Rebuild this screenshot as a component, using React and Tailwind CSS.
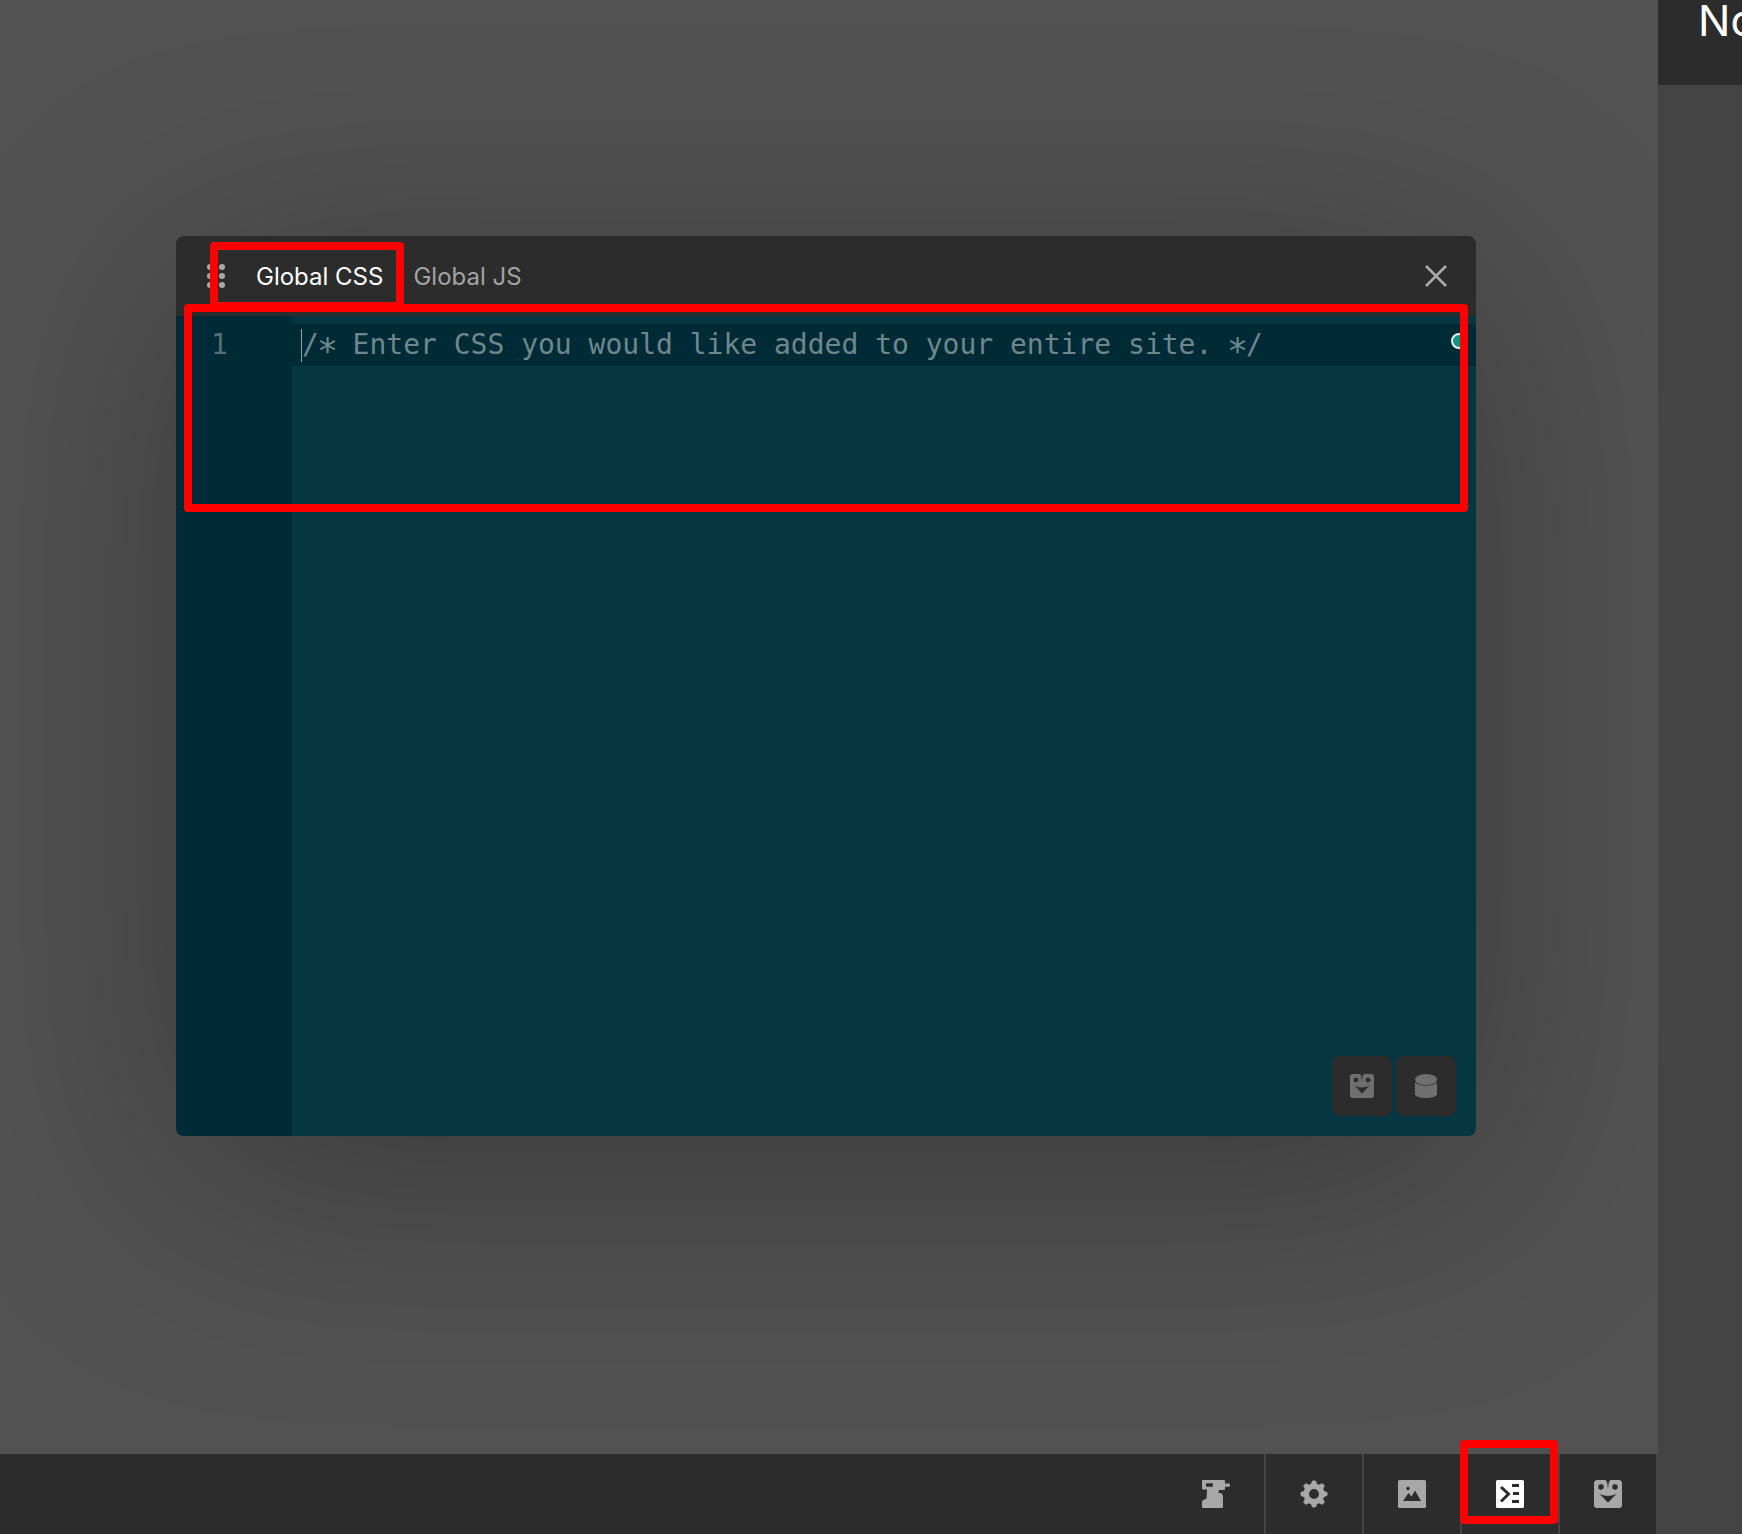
// App.jsx
const PenguinIcon = ({ className, cut }) => (
  <svg viewBox="0 0 24 24" className={className}>
    <path
      fill="currentColor"
      d="M3 0h6c2 0 2.500 2 3 8 .5-6 1-8 3-8h6a3 3 0 0 1 3 3v18.500a2.500 2.500 0 0 1-2.500 2.500h-19A2.500 2.500 0 0 1 0 21.500V3a3 3 0 0 1 3-3z"
    />
    <rect x="3.700" y="3.700" width="4.600" height="4.600" rx="1.800" fill={cut} />
    <rect x="15.700" y="3.700" width="4.600" height="4.600" rx="1.800" fill={cut} />
    <path fill={cut} d="M4.500 11.500c2.200 1.300 4.800 2 7.500 2s5.300-.7 7.500-2L12 19.500z" />
  </svg>
);

const DatabaseIcon = ({ className }) => (
  <svg viewBox="0 0 24 24" className={className}>
    <ellipse cx="12" cy="5.500" rx="11" ry="5.500" fill="currentColor" />
    <path
      fill="currentColor"
      d="M1 8c2 2.500 6 3.800 11 3.800S21 10.500 23 8v12c0 2.500-5 4-11 4S1 22.500 1 20z"
    />
  </svg>
);

const DrillIcon = () => (
  <svg viewBox="0 0 28 28" className="w-7 h-7 text-[#a8a8a8]">
    <path
      fill="currentColor"
      d="M1 0h21a1 1 0 0 1 1 1v2.500h4a1 1 0 0 1 1 1v1.300a1 1 0 0 1-1 1h-4V9a1 1 0 0 1-1 1h-5l-.6 3H18c1.500 0 3 1.500 3 4v10a1 1 0 0 1-1 1H1a1 1 0 0 1-1-1v-5c0-1 .6-1.500 1.500-2l3-1.500.6-9H1a1 1 0 0 1-1-1V1a1 1 0 0 1 1-1z"
    />
    <rect x="4" y="3.300" width="7" height="3.400" rx="1" fill="#2c2c2c" />
  </svg>
);

const GearIcon = () => (
  <svg viewBox="0 0 28 28" className="w-7 h-7 text-[#a8a8a8]">
    {[0, 45, 90, 135, 180, 225, 270, 315].map((a) => (
      <path
        key={a}
        d="M12.500 1h3l2 6h-7z"
        fill="currentColor"
        stroke="currentColor"
        strokeWidth="1"
        strokeLinejoin="round"
        transform={`rotate(${a} 14 14)`}
      />
    ))}
    <circle cx="14" cy="14" r="7.750" fill="none" stroke="currentColor" strokeWidth="5.500" />
  </svg>
);

const ImageIcon = () => (
  <svg viewBox="0 0 28 28" className="w-7 h-7 text-[#a8a8a8]">
    <rect width="28" height="28" rx="1.500" fill="currentColor" />
    <circle cx="10" cy="8.500" r="1.700" fill="#2c2c2c" />
    <path fill="#2c2c2c" d="M5 21l5.500-8 3 3.500 3.500-6 6 10.500z" />
  </svg>
);

const CodeIcon = () => (
  <svg viewBox="0 0 28 28" className="w-7 h-7">
    <rect width="28" height="28" rx="1.500" fill="#fff" />
    <path d="M5 7l7.500 7L5 21.500" fill="none" stroke="#2c2c2c" strokeWidth="3" />
    <path d="M16 5.500h7M17 13.500h6M16 21.500h7" fill="none" stroke="#2c2c2c" strokeWidth="3" />
  </svg>
);

const tools = [
  { key: "drill", icon: <DrillIcon /> },
  { key: "gear", icon: <GearIcon /> },
  { key: "image", icon: <ImageIcon /> },
  { key: "code", icon: <CodeIcon /> },
  { key: "penguin", icon: <PenguinIcon className="w-7 h-7 text-[#a8a8a8]" cut="#2c2c2c" /> },
];

// Menlo's asterisk sits lower and is bigger than the DejaVu one
const Star = () => <span className="inline-block translate-y-[7px] scale-125">*</span>;

function EditorModal() {
  return (
    <div className="w-[1300px] h-[900px] flex flex-col rounded-[8px] overflow-hidden shadow-[0_40px_240px_rgba(0,0,0,0.3)]">
      {/* Header with tabs */}
      <div className="h-[80px] shrink-0 bg-[#2c2c2c] flex items-center">
        <div className="ml-[31px] grid grid-cols-2 gap-x-[6px] gap-y-[3px]">
          {[0, 1, 2, 3, 4, 5].map((i) => (
            <span key={i} className="w-[6px] h-[6px] rounded-full bg-[#a8a8a8]" />
          ))}
        </div>
        <span className="ml-[31px] pt-[2px] text-[24px] text-white">Global CSS</span>
        <span className="ml-[30px] pt-[2px] text-[24px] text-[#a3a3a3]">Global JS</span>
        <svg viewBox="0 0 24 24" className="w-[24px] h-[24px] ml-auto mr-[28px] text-[#a8a8a8]">
          <path d="M2 2l20 20M22 2L2 22" stroke="currentColor" strokeWidth="2.600" fill="none" />
        </svg>
      </div>

      {/* Code area */}
      <div className="flex-1 flex bg-[#053641] relative">
        <div className="w-[116px] shrink-0 bg-[#002b36] pt-[8px] pl-[35px] font-['DejaVu_Sans_Mono',monospace] text-[28px] leading-[42px] text-[#586e75]">
          1
        </div>
        <div className="flex-1 pt-[8px]">
          <div className="h-[42px] bg-[#002b36] pl-[9px] flex items-center font-['DejaVu_Sans_Mono',monospace] text-[28px] leading-[42px] text-[#6d878c] whitespace-pre">
            <span className="w-px h-[33px] bg-[#8ea3a6]" />
            <span>
              /<Star />
              {" Enter CSS you would like added to your entire site. "}
              <Star />/
            </span>
          </div>
        </div>
        <span className="absolute left-[1275px] top-[17px] w-[16px] h-[16px] rounded-full bg-[#0f9488] border-2 border-[#e8f0f0]" />
        <div className="absolute right-[20px] bottom-[20px] flex gap-[4px]">
          <button className="w-[60px] h-[60px] rounded-[8px] bg-[#2c2c2c] flex items-center justify-center">
            <PenguinIcon className="w-6 h-6 text-[#6f6f6f]" cut="#2c2c2c" />
          </button>
          <button className="w-[60px] h-[60px] rounded-[8px] bg-[#2c2c2c] flex items-center justify-center">
            <DatabaseIcon className="w-6 h-6 text-[#6f6f6f]" />
          </button>
        </div>
      </div>
    </div>
  );
}

export default function App() {
  return (
    <div className="relative w-[1742px] h-[1534px] overflow-hidden flex bg-[#444444] font-['Inter',sans-serif]">
      {/* Canvas and bottom toolbar */}
      <div className="w-[1658px] shrink-0 flex flex-col">
        <div className="flex-1 bg-[#525252] pt-[236px] pl-[176px] overflow-hidden">
          <EditorModal />
        </div>
        <div className="h-[80px] shrink-0 w-[1656px] bg-[#2c2c2c] flex justify-end">
          {tools.map((t, i) => (
            <div
              key={t.key}
              className={`w-[98px] flex items-center justify-center border-l-2 ${
                i === 0 ? "border-transparent" : "border-[#444444]"
              }`}
            >
              {t.icon}
            </div>
          ))}
        </div>
      </div>

      {/* Right side panel */}
      <div className="flex-1 bg-[#444444]">
        <div className="h-[85px] bg-[#2c2c2c] overflow-hidden pl-[40px] text-[43px] leading-[40px] text-white whitespace-nowrap">
          No
        </div>
      </div>

      {/* Red annotation boxes */}
      <div className="absolute left-[210px] top-[242px] w-[194px] h-[68px] border-[8px] border-[#ff0000] rounded-[4px]" />
      <div className="absolute left-[184px] top-[304px] w-[1284px] h-[208px] border-[8px] border-[#ff0000] rounded-[4px]" />
      <div className="absolute left-[1460px] top-[1440px] w-[98px] h-[84px] border-[8px] border-[#ff0000] rounded-[4px]" />
    </div>
  );
}
